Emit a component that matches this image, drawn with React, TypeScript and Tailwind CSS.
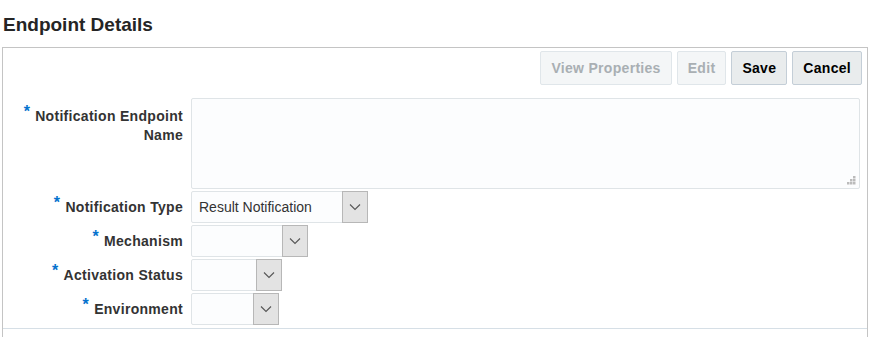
import React from "react";

function Chevron() {
  return (
    <svg width="12" height="8" viewBox="0 0 12 8" className="text-[#555]">
      <path d="M1 1.5 L6 6.5 L11 1.5" fill="none" stroke="currentColor" strokeWidth="1.1" />
    </svg>
  );
}

function Grip() {
  return (
    <svg width="10" height="10" viewBox="0 0 10 10" className="absolute right-[3px] bottom-[3px]">
      <rect x="7" y="1" width="2.5" height="2.5" fill="#bbb" />
      <rect x="4" y="4" width="2.5" height="2.5" fill="#bbb" />
      <rect x="7" y="4" width="2.5" height="2.5" fill="#bbb" />
      <rect x="1" y="7" width="2.5" height="2.5" fill="#bbb" />
      <rect x="4" y="7" width="2.5" height="2.5" fill="#bbb" />
      <rect x="7" y="7" width="2.5" height="2.5" fill="#bbb" />
    </svg>
  );
}

function Label({ children, top }: { children: React.ReactNode; top?: boolean }) {
  return (
    <div
      className={`w-[180px] shrink-0 text-right text-[14px] font-bold leading-[19px] tracking-[0.3px] text-[#333] ${
        top ? "pt-[8px]" : "self-center"
      }`}
    >
      <span className="relative -top-[4px] mr-[5px] text-[16px] text-[#0572ce]">*</span>
      {children}
    </div>
  );
}

function Select({ width, value }: { width: number; value?: string }) {
  return (
    <div
      className="flex h-[32px] items-stretch rounded-[2px] border border-[#dfe4e7] bg-[#fcfdfe]"
      style={{ width }}
    >
      <div className="flex flex-1 items-center pl-[7px] text-[14px] text-[#333]">{value}</div>
      <div className="-my-px -mr-px flex w-[26px] items-center justify-center border border-[#b7b7b7] bg-[#e3e3e3]">
        <Chevron />
      </div>
    </div>
  );
}

function Btn({ children, disabled }: { children: React.ReactNode; disabled?: boolean }) {
  return (
    <button
      className={`h-[34px] rounded-[2px] border px-[10px] text-[14px] font-bold tracking-[0.3px] ${
        disabled
          ? "border-[#e0e6ea] bg-[#f4f6f7] text-[#a9afb3]"
          : "border-[#c4ced7] bg-[#e9eced] text-black"
      }`}
    >
      {children}
    </button>
  );
}

export default function App() {
  return (
    <div className="h-[337px] w-[885px] overflow-hidden bg-white font-['Liberation_Sans',Arial,sans-serif]">
      <h1 className="pl-[3px] pt-[14px] text-[19px] font-bold leading-[22px] text-[#252525]">
        Endpoint Details
      </h1>
      <div className="ml-[2px] mt-[11px] w-[866px] border-x border-t border-[#c4c4c4]">
        <div className="flex justify-end gap-[5px] pr-[5px] pt-[3px]">
          <Btn disabled>View Properties</Btn>
          <Btn disabled>Edit</Btn>
          <Btn>Save</Btn>
          <Btn>Cancel</Btn>
        </div>
        <div className="mt-[13px] flex flex-col gap-[2px]">
          <div className="flex gap-[8px]">
            <Label top>
              Notification Endpoint
              <br />
              Name
            </Label>
            <div className="relative h-[91px] w-[669px] rounded-[2px] border border-[#dfe4e7] bg-[#fcfdfe]">
              <Grip />
            </div>
          </div>
          <div className="flex gap-[8px]">
            <Label>Notification Type</Label>
            <Select width={177} value="Result Notification" />
          </div>
          <div className="flex gap-[8px]">
            <Label>Mechanism</Label>
            <Select width={117} />
          </div>
          <div className="flex gap-[8px]">
            <Label>Activation Status</Label>
            <Select width={91} />
          </div>
          <div className="flex gap-[8px]">
            <Label>Environment</Label>
            <Select width={88} />
          </div>
        </div>
        <div className="mt-[3px] h-[20px] border-t border-[#d6dfe6]" />
      </div>
    </div>
  );
}
